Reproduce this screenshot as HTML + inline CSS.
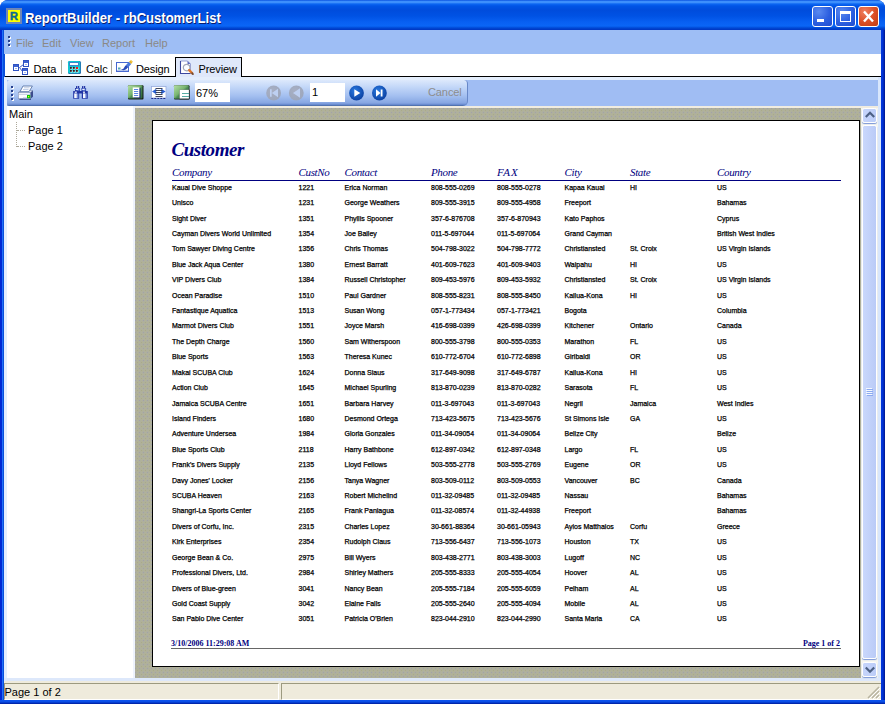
<!DOCTYPE html>
<html><head><meta charset="utf-8"><title>ReportBuilder - rbCustomerList</title>
<style>
*{box-sizing:border-box;margin:0;padding:0}
html,body{width:885px;height:704px;overflow:hidden;background:#fff}
body{position:relative;font-family:"Liberation Sans",sans-serif;font-size:11px;color:#000}
.abs{position:absolute}
#win{position:absolute;left:0;top:0;width:885px;height:704px;background:linear-gradient(to right,#0028d4 0,#0028d4 2px,#2070f8 2px,#2070f8 3px,#0a50dc 3px,#0a50dc 4px,#0a50dc 881px,#0038e0 881px,#0030d0 883px,#00168c 885px);border-radius:8px 8px 0 0;overflow:hidden}
#title{position:absolute;left:0;top:0;width:885px;height:30px;background:linear-gradient(to bottom,#0a52e0 0,#3d8ffc 1.5px,#3d8ffc 2.5px,#0c66f2 4px,#0054e6 6px,#004cdc 10px,#0052e4 16px,#0860f2 22px,#0a66f6 26px,#0048d4 28px,#0034c0 30px)}
#title .txt{position:absolute;left:24.5px;top:9px;font:bold 14.5px/18px "Liberation Sans",sans-serif;color:#fff;text-shadow:1px 1px 0 #0a1c6e;white-space:nowrap;transform:scaleX(0.9);transform-origin:0 0}
#appicon{position:absolute;left:6px;top:8px;width:16px;height:16px;background:#6f86b6}
#appicon i{position:absolute;left:2px;top:2px;width:12px;height:12px;background:#ffff00;font:bold 11px/12px "Liberation Sans",sans-serif;font-style:normal;color:#0a6a90;text-align:center;-webkit-text-stroke:0.5px #0a6a90}
.cb{position:absolute;top:6px;width:21px;height:21px;border:1px solid #fff;border-radius:3px;background:radial-gradient(circle at 30% 25%,#5a8af0 0,#2c5fe0 55%,#1e4cd0 100%)}
#menubar{position:absolute;left:4px;top:30px;width:877px;height:24px;background:#9ebef5}
#menubar span{position:absolute;top:6.5px;color:#8b8985;font-size:11px;line-height:13px}
#tabs{position:absolute;left:5px;top:54px;width:876px;height:23px;background:#fff;border-bottom:1px solid #000}
#tbarbg{position:absolute;left:4px;top:77px;width:877px;height:29px;background:#a0bdf3;border-top:3px solid #e4eefc;border-right:3px solid #d4e2fa;border-left:3px solid #d4e2fa}
#tbar{position:absolute;left:7px;top:80px;width:461px;height:26px;border-radius:3px 4px 5px 2px;border-right:1px solid #6888c8;background:linear-gradient(to bottom,#dde9fc 0,#c3d7f8 7px,#a3bff0 16px,#86a6e2 23px,#6a8cd0 24.500px,#45669f 26px)}
#tree{position:absolute;left:7px;top:106px;width:126px;height:572px;background:#fff}
#split{position:absolute;left:133px;top:106px;width:2px;height:572px;background:#eef3fd}
#view{position:absolute;left:135px;top:106px;width:726px;height:572px;background:radial-gradient(circle at 0.5px 0.5px,#a0a0ae 0.5px,rgba(160,160,174,0) 0.8px) 0 0/4px 4px,radial-gradient(circle at 2.5px 2.5px,#abab86 0.5px,rgba(171,171,134,0) 0.8px) 0 0/4px 4px,#afb09b;border-top:2px solid #f0ece0}
#vscroll{position:absolute;left:861px;top:106px;width:17px;height:572px;background:#f6f6f0;border-top:2px solid #f0ece0}
#page{position:absolute;left:152px;top:120px;width:708px;height:547px;background:#fff;border:1px solid #000}
#status{position:absolute;left:4px;top:681px;width:877px;height:19px;background:#efebdc}

#page .r{position:absolute;left:0;width:700px;height:8px;font:7px/8px "Liberation Sans",sans-serif;color:#000;-webkit-text-stroke:0.25px #000}
#page .r span{position:absolute;top:0;white-space:nowrap}
#page .h{position:absolute;top:45.4px;letter-spacing:-0.35px;font:italic 11px/12px "Liberation Serif",serif;color:#000080;white-space:nowrap}
#ptitle{position:absolute;left:18.5px;top:17.6px;letter-spacing:-0.45px;font:italic bold 19px/22px "Liberation Serif",serif;color:#000080;white-space:nowrap}
#hline{position:absolute;left:19px;top:59px;width:669px;height:1px;background:#000080}
#fline{position:absolute;left:18px;top:527px;width:670px;height:1px;background:#666}
.ft{position:absolute;top:517.5px;font:bold 8px/10px "Liberation Serif",serif;color:#000080;white-space:nowrap}

.tabt{position:absolute;top:8.5px;font-size:11px;line-height:13px;white-space:nowrap;letter-spacing:-0.1px}
.tsep{position:absolute;top:6px;width:1px;height:14px;background:#aca899}
#ptab{position:absolute;left:175px;top:57px;width:67px;height:20px;border:1px solid #000;border-bottom:none;background:#dfe8fa}
svg{position:absolute;overflow:visible}
.grip i{position:absolute;left:0;width:2px;height:2px;background:#27418f;box-shadow:1px 1px 0 #fff}
.inp{position:absolute;background:#fff;font-size:11px;line-height:13px}
.trow{position:absolute;font-size:11px;line-height:13px;white-space:nowrap}
#lstrip{position:absolute;left:4px;top:77px;width:3px;height:604px;background:#e4eefe}
#rstrip{position:absolute;left:878px;top:77px;width:3px;height:604px;background:#d8e6fc}
#bstrip{position:absolute;left:4px;top:678px;width:877px;height:3px;background:#dde8fb}
.sbtn{position:absolute;left:1px;width:15px;height:14.500px;border:1px solid #fff;border-radius:2.500px;background:linear-gradient(to right,#c6d5fb,#bccdf8);box-shadow:0 1px 1px #7a96d6}
#thumb{position:absolute;left:1px;top:17px;width:15px;height:534px;border:1px solid #fff;border-radius:2.500px;background:linear-gradient(to right,#cad8fc,#bacbf7);box-shadow:0 1px 1px #7a96d6}
#bbord{position:absolute;left:0;top:700px;width:885px;height:4px;background:linear-gradient(to bottom,#0c54ee 0,#0a4ce4 2px,#0030bc 3px,#001c9c 4px)}
</style></head><body>
<div id="win">
<div id="title"><div id="appicon"><i>R</i></div><div class="txt">ReportBuilder - rbCustomerList</div>
<div class="cb" style="left:812px"><div style="position:absolute;left:4px;top:12px;width:7px;height:3px;background:#fff"></div></div>
<div class="cb" style="left:835px"><div style="position:absolute;left:4px;top:4px;width:11px;height:11px;border:1px solid #fff;border-top-width:3px"></div></div>
<div class="cb" style="left:858px;background:radial-gradient(circle at 30% 25%,#f08060 0,#dc5028 50%,#c03c12 100%)"><svg style="left:0;top:0" width="19" height="19" viewBox="0 0 19 19"><path d="M5 4.500L14 14.500M14 4.500L5 14.500" stroke="#fff" stroke-width="2.400" stroke-linecap="butt"/></svg></div>
</div>
<div id="menubar"><div class="grip" style="position:absolute;left:4px;top:6px"><i style="top:0"></i><i style="top:4px"></i><i style="top:8px"></i></div><span style="left:12px">File</span><span style="left:38px">Edit</span><span style="left:66px">View</span><span style="left:98px">Report</span><span style="left:141px">Help</span></div>
<div id="tabs">
<svg style="left:8px;top:6px" width="16" height="16" viewBox="0 0 16 16">
<path d="M6.5 7.5L10.5 4.5M6.5 7.5L9.5 11.5" stroke="#3a5cc4" stroke-width="1" fill="none"/>
<g fill="#fff" stroke="#2f52c2" stroke-width="1"><rect x="0.5" y="4.5" width="5" height="6"/><rect x="10.5" y="0.5" width="5" height="6"/><rect x="9.5" y="8.5" width="5" height="6"/></g>
<g fill="#3d62d0"><rect x="1" y="5" width="4" height="2"/><rect x="11" y="1" width="4" height="2"/><rect x="10" y="9" width="4" height="2"/></g>
<g fill="#9fb6ea"><rect x="2" y="8" width="2" height="1"/><rect x="12" y="4" width="2" height="1"/><rect x="11" y="12" width="2" height="1"/></g>
</svg>
<span class="tabt" style="left:28.5px">Data</span>
<div class="tsep" style="left:56px"></div>
<svg style="left:63px;top:7px" width="13" height="13" viewBox="0 0 13 13">
<rect x="0" y="0" width="13" height="13" rx="1.500" fill="#2a6cb0"/><rect x="0" y="0" width="12.200" height="12.200" rx="1.500" fill="#10c6d0"/>
<rect x="1.500" y="1.500" width="9" height="3" fill="#fff" stroke="#3a86d0" stroke-width="1"/>
<g fill="#e8fcfc"><rect x="2.500" y="6.500" width="2" height="2"/><rect x="5.500" y="6.500" width="2" height="2"/><rect x="8.500" y="6.500" width="2" height="2"/><rect x="2.500" y="9.500" width="2" height="2"/><rect x="5.500" y="9.500" width="2" height="2"/><rect x="8.500" y="9.500" width="2" height="2"/></g>
<g fill="#401818"><rect x="2" y="6" width="1.800" height="1.800"/><rect x="5" y="6" width="1.800" height="1.800"/><rect x="2" y="9" width="1.800" height="1.800"/><rect x="5" y="9" width="1.800" height="1.800"/><rect x="8" y="9" width="1.800" height="1.800"/></g>
<rect x="8" y="6" width="2" height="2" fill="#f01818"/>
</svg>
<span class="tabt" style="left:81px">Calc</span>
<div class="tsep" style="left:106px"></div>
<svg style="left:111px;top:6px" width="17" height="13" viewBox="0 0 17 13">
<rect x="0.500" y="2.500" width="12" height="9" fill="#fff" stroke="#4668d0" stroke-width="1"/>
<rect x="1" y="10" width="11" height="1" fill="#b4c4ec"/>
<rect x="2" y="7.500" width="2.500" height="2" fill="#58a8b8"/>
<path d="M4.500 9.500Q7.500 9.800 8.500 7Q9 5.500 10.500 5L12.500 7Q11 8 10.500 9Q8.500 11 4.500 9.500Z" fill="#2848b8"/>
<path d="M10 5L13 1.800L15.200 4L12.300 7.200Z" fill="#4a78dc"/>
<path d="M13 1.800L15 0L16.800 1.500L15.200 4Z" fill="#e8b428"/>
<path d="M14.500 0.300L16.500 1.800" stroke="#fff0a0" stroke-width="0.600"/>
</svg>
<span class="tabt" style="left:131px">Design</span>
</div>
<div id="ptab">
<svg style="left:3px;top:2px" width="16" height="16" viewBox="0 0 16 16">
<path d="M1.500 1H8.500L11.500 4V13.500H1.500Z" fill="#fff" stroke="#8c98d0" stroke-width="0.900"/>
<path d="M1.500 1V13.500H11.500" fill="none" stroke="#3c48a0" stroke-width="1.100"/>
<path d="M8.500 1V4H11.500Z" fill="#5a68c0"/>
<circle cx="7.600" cy="7.600" r="3.300" fill="#fbfdff" stroke="#a4a8b8" stroke-width="1.200"/>
<path d="M10.200 10.200L13.300 13.400" stroke="#e07828" stroke-width="2.400" stroke-linecap="round"/>
<path d="M13 13L14 14.200" stroke="#6a4a38" stroke-width="1.600" stroke-linecap="round"/>
</svg>
<span class="tabt" style="left:22.5px;top:4.5px">Preview</span>
</div>
<div id="tbarbg"></div><div id="tbar"><div style="position:absolute;left:0;top:-1px;width:460px;height:27px">
<div class="grip" style="position:absolute;left:4px;top:7px"><i style="top:0"></i><i style="top:4px"></i><i style="top:8px"></i><i style="top:12px"></i></div>
<!-- printer -->
<svg style="left:11px;top:6px" width="16" height="15" viewBox="0 0 16 15">
<path d="M12.200 7.600L15 5.200V11.800L12.200 14Z" fill="#3c4c8c"/>
<path d="M0.300 7.600L2.500 5.500H15L12.200 7.600Z" fill="#dfe4f0" stroke="#7080a8" stroke-width="0.500"/>
<path d="M5 1H14.400L11 6.700H2Z" fill="#fff" stroke="#5a76a8" stroke-width="0.900"/>
<path d="M6 2.800H11.500M5 4.600H10.500" stroke="#a8bce0" stroke-width="0.800"/>
<rect x="0.300" y="7.600" width="11.900" height="6.200" fill="#fdfdff" stroke="#8090b4" stroke-width="0.600"/>
<path d="M0.600 9.300H12" stroke="#b4bed8" stroke-width="0.800"/>
<path d="M5 12.800H12" stroke="#c4cce0" stroke-width="1"/>
<path d="M1.500 14.200H13" stroke="#283878" stroke-width="1.100"/>
<rect x="9" y="10" width="3.200" height="3.200" fill="#08c808"/><rect x="10" y="11" width="1.200" height="1.200" fill="#e8f818"/>
</svg>
<!-- binoculars -->
<svg style="left:66px;top:6px" width="16" height="14" viewBox="0 0 16 14">
<g fill="#2034a4"><rect x="3" y="1" width="3.200" height="2.400" rx="0.600"/><rect x="9" y="1" width="3.200" height="2.400" rx="0.600"/>
<rect x="2" y="3" width="5" height="3.200"/><rect x="8.500" y="3" width="4.600" height="3.200"/>
<rect x="0.200" y="6" width="6" height="7.700" rx="0.500"/><rect x="8.800" y="6" width="6" height="7.700" rx="0.500"/><rect x="6" y="6" width="3" height="2.500"/></g>
<g fill="#6a88d8"><rect x="3.500" y="3.300" width="3" height="2.400"/><rect x="9.500" y="3.300" width="3" height="2.400"/><rect x="3.800" y="8.500" width="1.600" height="4.600"/><rect x="12.200" y="8.500" width="1.600" height="4.600"/></g>
<g fill="#f4f8ff"><rect x="1.200" y="8.400" width="2.600" height="4.700"/><rect x="10" y="8.400" width="2.400" height="4.700"/><rect x="4" y="1.500" width="1" height="1"/><rect x="10" y="1.500" width="1" height="1"/><rect x="2.700" y="3.900" width="2.400" height="1"/><rect x="9.200" y="3.900" width="2.400" height="1"/><rect x="1.800" y="6.600" width="2" height="1.200"/><rect x="10" y="6.600" width="2" height="1.200"/></g>
</svg>
<!-- whole page -->
<svg style="left:121px;top:6px" width="16" height="15" viewBox="0 0 16 15">
<defs><linearGradient id="gg" x1="0" y1="0" x2="1" y2="1"><stop offset="0" stop-color="#b4e0a4"/><stop offset="0.450" stop-color="#78b470"/><stop offset="0.550" stop-color="#4a8a54"/><stop offset="1" stop-color="#2c6038"/></linearGradient></defs>
<rect x="0" y="0.200" width="15.500" height="14.300" rx="1" fill="#141c14"/><rect x="0" y="0.200" width="14.500" height="13.300" rx="1" fill="url(#gg)"/>
<rect x="5.700" y="3.200" width="6.800" height="10" fill="#18246c"/>
<rect x="4.700" y="2.400" width="6.700" height="10" fill="#fff"/>
<path d="M6 4.500H10.200M6 6.500H10.200M6 8.500H10.200M6 10.500H10.200" stroke="#4a78e0" stroke-width="0.900"/>
</svg>
<!-- page width -->
<svg style="left:144px;top:7px" width="16" height="13" viewBox="0 0 16 13">
<rect x="0.500" y="0.500" width="14.500" height="11.500" fill="#fff" stroke="#98acdc" stroke-width="0.800"/>
<path d="M0.300 12.500H15.300" stroke="#1c2c8c" stroke-width="1" stroke-dasharray="2 1"/>
<path d="M1 5.500L5.500 2.500V8.500Z M14.600 5.500L10.100 2.500V8.500Z" fill="#2c64d8"/>
<path d="M4.500 2.500H11.500M4.500 4.500H11.500M4.500 6.500H11.500M4.500 8.500H11.500M4.500 10.500H11.500" stroke="#2c3448" stroke-width="0.900"/>
<path d="M5.500 3.500H10.100M5.500 5.500H10.100M5.500 7.500H10.100" stroke="#fff" stroke-width="1"/>
</svg>
<!-- 100% -->
<svg style="left:167.200px;top:6px" width="16" height="15" viewBox="0 0 16 15">
<rect x="0" y="0.200" width="15.500" height="14.300" rx="1" fill="#141c14"/><rect x="0" y="0.200" width="14.800" height="13.600" rx="1" fill="url(#gg)"/>
<rect x="5.600" y="4.800" width="9.900" height="9.500" fill="#0c100c"/>
<rect x="5.600" y="4.800" width="9.300" height="8.800" fill="#fff"/>
<path d="M8 8.500H15M8 11.500H15" stroke="#58aca4" stroke-width="1"/>
</svg>
<div class="inp" style="left:188px;top:4px;width:35px;height:19px;padding:3.5px 0 0 1px">67%</div>
<!-- nav -->
<svg style="left:259px;top:6px" width="128" height="16" viewBox="0 0 128 16">
<defs>
<radialGradient id="gd" cx="0.4" cy="0.35" r="0.7"><stop offset="0" stop-color="#a8b0c4"/><stop offset="1" stop-color="#9ca6bc"/></radialGradient>
<radialGradient id="ga" cx="0.4" cy="0.35" r="0.7"><stop offset="0" stop-color="#2a7ae0"/><stop offset="1" stop-color="#0a3fa0"/></radialGradient>
</defs>
<circle cx="7.600" cy="8" r="7.400" fill="url(#gd)"/><circle cx="30.300" cy="8" r="7.400" fill="url(#gd)"/>
<path d="M4 4.300H5.700V11.700H4Z M12 3.700V12.300L5.800 8Z" fill="#bed0f2"/>
<path d="M34 3.300V12.700L27 8Z" fill="#bed0f2"/>
<circle cx="90.500" cy="8" r="7.400" fill="url(#ga)"/><circle cx="113.400" cy="8" r="7.400" fill="url(#ga)"/>
<path d="M88.300 4.300V11.700L94.300 8Z" fill="#fff"/>
<path d="M110 4.300V11.700L114.500 8Z M114.700 4.500H116.500V11.500H114.700Z" fill="#fff"/>
</svg>
<div class="inp" style="left:303px;top:4px;width:35px;height:19px;padding:3px 0 0 2px">1</div>
<span class="tabt" style="left:421px;top:7px;color:#8d8d8d">Cancel</span>
</div></div>
<div id="bbord"></div><div id="lstrip"></div><div id="rstrip"></div><div id="bstrip"></div><div id="tree">
<span class="trow" style="left:2px;top:2px">Main</span>
<span class="trow" style="left:21px;top:18px">Page 1</span>
<span class="trow" style="left:21px;top:34px">Page 2</span>
<div style="position:absolute;left:9px;top:16px;width:0;height:25px;border-left:1px dotted #aca899"></div>
<div style="position:absolute;left:10px;top:24px;width:8px;height:0;border-top:1px dotted #aca899"></div>
<div style="position:absolute;left:10px;top:40px;width:8px;height:0;border-top:1px dotted #aca899"></div>
</div><div id="split"></div><div id="view"></div><div id="vscroll">
<div class="sbtn" style="top:0px"><svg style="left:0.5px;top:0" width="12" height="12" viewBox="0 0 12 12"><path d="M1.800 8L6 3.800L10.200 8" fill="none" stroke="#4d6185" stroke-width="2.200"/></svg></div>
<div id="thumb"><svg style="left:3px;top:262px" width="7" height="9" viewBox="0 0 7 9"><path d="M0 0.500H6M0 2.500H6M0 4.500H6M0 6.500H6" stroke="#f4f8ff" stroke-width="1"/><path d="M1 1.500H7M1 3.500H7M1 5.500H7M1 7.500H7" stroke="#8caaf0" stroke-width="1"/></svg></div>
<div class="sbtn" style="top:553.5px;height:15px"><svg style="left:0.5px;top:0" width="12" height="12" viewBox="0 0 12 12"><path d="M1.800 4.500L6 8.700L10.200 4.500" fill="none" stroke="#4d6185" stroke-width="2.200"/></svg></div>
</div>
<div id="page"><div id="ptitle">Customer</div><div class="h" style="left:19px">Company</div><div class="h" style="left:145.5px">CustNo</div><div class="h" style="left:191.5px">Contact</div><div class="h" style="left:278px">Phone</div><div class="h" style="left:344px;letter-spacing:1px">FAX</div><div class="h" style="left:411.5px">City</div><div class="h" style="left:477px">State</div><div class="h" style="left:564px">Country</div><div id="hline"></div>
<!--ROWS-->
<div class="r" style="top:63.00px"><span style="left:19px">Kauai Dive Shoppe</span><span style="left:145.5px">1221</span><span style="left:191.5px">Erica Norman</span><span style="left:278px">808-555-0269</span><span style="left:344px">808-555-0278</span><span style="left:411.5px">Kapaa Kauai</span><span style="left:477px">HI</span><span style="left:564px">US</span></div>
<div class="r" style="top:78.00px"><span style="left:19px">Unisco</span><span style="left:145.5px">1231</span><span style="left:191.5px">George Weathers</span><span style="left:278px">809-555-3915</span><span style="left:344px">809-555-4958</span><span style="left:411.5px">Freeport</span><span style="left:564px">Bahamas</span></div>
<div class="r" style="top:94.00px"><span style="left:19px">Sight Diver</span><span style="left:145.5px">1351</span><span style="left:191.5px">Phyllis Spooner</span><span style="left:278px">357-6-876708</span><span style="left:344px">357-6-870943</span><span style="left:411.5px">Kato Paphos</span><span style="left:564px">Cyprus</span></div>
<div class="r" style="top:109.00px"><span style="left:19px">Cayman Divers World Unlimited</span><span style="left:145.5px">1354</span><span style="left:191.5px">Joe Bailey</span><span style="left:278px">011-5-697044</span><span style="left:344px">011-5-697064</span><span style="left:411.5px">Grand Cayman</span><span style="left:564px">British West Indies</span></div>
<div class="r" style="top:124.00px"><span style="left:19px">Tom Sawyer Diving Centre</span><span style="left:145.5px">1356</span><span style="left:191.5px">Chris Thomas</span><span style="left:278px">504-798-3022</span><span style="left:344px">504-798-7772</span><span style="left:411.5px">Christiansted</span><span style="left:477px">St. Croix</span><span style="left:564px">US Virgin Islands</span></div>
<div class="r" style="top:140.00px"><span style="left:19px">Blue Jack Aqua Center</span><span style="left:145.5px">1380</span><span style="left:191.5px">Ernest Barratt</span><span style="left:278px">401-609-7623</span><span style="left:344px">401-609-9403</span><span style="left:411.5px">Waipahu</span><span style="left:477px">HI</span><span style="left:564px">US</span></div>
<div class="r" style="top:155.00px"><span style="left:19px">VIP Divers Club</span><span style="left:145.5px">1384</span><span style="left:191.5px">Russell Christopher</span><span style="left:278px">809-453-5976</span><span style="left:344px">809-453-5932</span><span style="left:411.5px">Christiansted</span><span style="left:477px">St. Croix</span><span style="left:564px">US Virgin Islands</span></div>
<div class="r" style="top:171.00px"><span style="left:19px">Ocean Paradise</span><span style="left:145.5px">1510</span><span style="left:191.5px">Paul Gardner</span><span style="left:278px">808-555-8231</span><span style="left:344px">808-555-8450</span><span style="left:411.5px">Kailua-Kona</span><span style="left:477px">HI</span><span style="left:564px">US</span></div>
<div class="r" style="top:186.00px"><span style="left:19px">Fantastique Aquatica</span><span style="left:145.5px">1513</span><span style="left:191.5px">Susan Wong</span><span style="left:278px">057-1-773434</span><span style="left:344px">057-1-773421</span><span style="left:411.5px">Bogota</span><span style="left:564px">Columbia</span></div>
<div class="r" style="top:201.00px"><span style="left:19px">Marmot Divers Club</span><span style="left:145.5px">1551</span><span style="left:191.5px">Joyce Marsh</span><span style="left:278px">416-698-0399</span><span style="left:344px">426-698-0399</span><span style="left:411.5px">Kitchener</span><span style="left:477px">Ontario</span><span style="left:564px">Canada</span></div>
<div class="r" style="top:217.00px"><span style="left:19px">The Depth Charge</span><span style="left:145.5px">1560</span><span style="left:191.5px">Sam Witherspoon</span><span style="left:278px">800-555-3798</span><span style="left:344px">800-555-0353</span><span style="left:411.5px">Marathon</span><span style="left:477px">FL</span><span style="left:564px">US</span></div>
<div class="r" style="top:232.00px"><span style="left:19px">Blue Sports</span><span style="left:145.5px">1563</span><span style="left:191.5px">Theresa Kunec</span><span style="left:278px">610-772-6704</span><span style="left:344px">610-772-6898</span><span style="left:411.5px">Giribaldi</span><span style="left:477px">OR</span><span style="left:564px">US</span></div>
<div class="r" style="top:248.00px"><span style="left:19px">Makai SCUBA Club</span><span style="left:145.5px">1624</span><span style="left:191.5px">Donna Siaus</span><span style="left:278px">317-649-9098</span><span style="left:344px">317-649-6787</span><span style="left:411.5px">Kailua-Kona</span><span style="left:477px">HI</span><span style="left:564px">US</span></div>
<div class="r" style="top:263.00px"><span style="left:19px">Action Club</span><span style="left:145.5px">1645</span><span style="left:191.5px">Michael Spurling</span><span style="left:278px">813-870-0239</span><span style="left:344px">813-870-0282</span><span style="left:411.5px">Sarasota</span><span style="left:477px">FL</span><span style="left:564px">US</span></div>
<div class="r" style="top:279.00px"><span style="left:19px">Jamaica SCUBA Centre</span><span style="left:145.5px">1651</span><span style="left:191.5px">Barbara Harvey</span><span style="left:278px">011-3-697043</span><span style="left:344px">011-3-697043</span><span style="left:411.5px">Negril</span><span style="left:477px">Jamaica</span><span style="left:564px">West Indies</span></div>
<div class="r" style="top:294.00px"><span style="left:19px">Island Finders</span><span style="left:145.5px">1680</span><span style="left:191.5px">Desmond Ortega</span><span style="left:278px">713-423-5675</span><span style="left:344px">713-423-5676</span><span style="left:411.5px">St Simons Isle</span><span style="left:477px">GA</span><span style="left:564px">US</span></div>
<div class="r" style="top:309.00px"><span style="left:19px">Adventure Undersea</span><span style="left:145.5px">1984</span><span style="left:191.5px">Gloria Gonzales</span><span style="left:278px">011-34-09054</span><span style="left:344px">011-34-09064</span><span style="left:411.5px">Belize City</span><span style="left:564px">Belize</span></div>
<div class="r" style="top:325.00px"><span style="left:19px">Blue Sports Club</span><span style="left:145.5px">2118</span><span style="left:191.5px">Harry Bathbone</span><span style="left:278px">612-897-0342</span><span style="left:344px">612-897-0348</span><span style="left:411.5px">Largo</span><span style="left:477px">FL</span><span style="left:564px">US</span></div>
<div class="r" style="top:340.00px"><span style="left:19px">Frank's Divers Supply</span><span style="left:145.5px">2135</span><span style="left:191.5px">Lloyd Fellows</span><span style="left:278px">503-555-2778</span><span style="left:344px">503-555-2769</span><span style="left:411.5px">Eugene</span><span style="left:477px">OR</span><span style="left:564px">US</span></div>
<div class="r" style="top:356.00px"><span style="left:19px">Davy Jones' Locker</span><span style="left:145.5px">2156</span><span style="left:191.5px">Tanya Wagner</span><span style="left:278px">803-509-0112</span><span style="left:344px">803-509-0553</span><span style="left:411.5px">Vancouver</span><span style="left:477px">BC</span><span style="left:564px">Canada</span></div>
<div class="r" style="top:371.00px"><span style="left:19px">SCUBA Heaven</span><span style="left:145.5px">2163</span><span style="left:191.5px">Robert Michelind</span><span style="left:278px">011-32-09485</span><span style="left:344px">011-32-09485</span><span style="left:411.5px">Nassau</span><span style="left:564px">Bahamas</span></div>
<div class="r" style="top:386.00px"><span style="left:19px">Shangri-La Sports Center</span><span style="left:145.5px">2165</span><span style="left:191.5px">Frank Paniagua</span><span style="left:278px">011-32-08574</span><span style="left:344px">011-32-44938</span><span style="left:411.5px">Freeport</span><span style="left:564px">Bahamas</span></div>
<div class="r" style="top:402.00px"><span style="left:19px">Divers of Corfu, Inc.</span><span style="left:145.5px">2315</span><span style="left:191.5px">Charles Lopez</span><span style="left:278px">30-661-88364</span><span style="left:344px">30-661-05943</span><span style="left:411.5px">Ayios Matthaios</span><span style="left:477px">Corfu</span><span style="left:564px">Greece</span></div>
<div class="r" style="top:417.00px"><span style="left:19px">Kirk Enterprises</span><span style="left:145.5px">2354</span><span style="left:191.5px">Rudolph Claus</span><span style="left:278px">713-556-6437</span><span style="left:344px">713-556-1073</span><span style="left:411.5px">Houston</span><span style="left:477px">TX</span><span style="left:564px">US</span></div>
<div class="r" style="top:433.00px"><span style="left:19px">George Bean &amp; Co.</span><span style="left:145.5px">2975</span><span style="left:191.5px">Bill Wyers</span><span style="left:278px">803-438-2771</span><span style="left:344px">803-438-3003</span><span style="left:411.5px">Lugoff</span><span style="left:477px">NC</span><span style="left:564px">US</span></div>
<div class="r" style="top:448.00px"><span style="left:19px">Professional Divers, Ltd.</span><span style="left:145.5px">2984</span><span style="left:191.5px">Shirley Mathers</span><span style="left:278px">205-555-8333</span><span style="left:344px">205-555-4054</span><span style="left:411.5px">Hoover</span><span style="left:477px">AL</span><span style="left:564px">US</span></div>
<div class="r" style="top:464.00px"><span style="left:19px">Divers of Blue-green</span><span style="left:145.5px">3041</span><span style="left:191.5px">Nancy Bean</span><span style="left:278px">205-555-7184</span><span style="left:344px">205-555-6059</span><span style="left:411.5px">Pelham</span><span style="left:477px">AL</span><span style="left:564px">US</span></div>
<div class="r" style="top:479.00px"><span style="left:19px">Gold Coast Supply</span><span style="left:145.5px">3042</span><span style="left:191.5px">Elaine Falls</span><span style="left:278px">205-555-2640</span><span style="left:344px">205-555-4094</span><span style="left:411.5px">Mobile</span><span style="left:477px">AL</span><span style="left:564px">US</span></div>
<div class="r" style="top:494.00px"><span style="left:19px">San Pablo Dive Center</span><span style="left:145.5px">3051</span><span style="left:191.5px">Patricia O'Brien</span><span style="left:278px">823-044-2910</span><span style="left:344px">823-044-2990</span><span style="left:411.5px">Santa Maria</span><span style="left:477px">CA</span><span style="left:564px">US</span></div>
<!--/ROWS-->
<div class="ft" style="left:18px">3/10/2006 11:29:08 AM</div><div class="ft" style="right:19px">Page 1 of 2</div><div id="fline"></div></div>
<div id="status">
<div style="position:absolute;left:0;top:2px;width:275px;height:17px;border-top:1px solid #9c9a80;border-left:1px solid #9c9a80;border-right:1px solid #fff;border-bottom:1px solid #fff"></div>
<div style="position:absolute;left:277px;top:2px;width:600px;height:17px;border-top:1px solid #9c9a80;border-left:1px solid #9c9a80;border-bottom:1px solid #fff"></div>
<span class="trow" style="left:0.5px;top:5px">Page 1 of 2</span>
<svg style="right:1px;bottom:1px" width="13" height="13" viewBox="0 0 13 13"><path d="M12 1L1 12M12 5L5 12M12 9L9 12" stroke="#b8b4a0" stroke-width="1.500"/><path d="M13 2L2 13M13 6L6 13M13 10L10 13" stroke="#fff" stroke-width="1"/></svg>
</div>
</div>
</body></html>
